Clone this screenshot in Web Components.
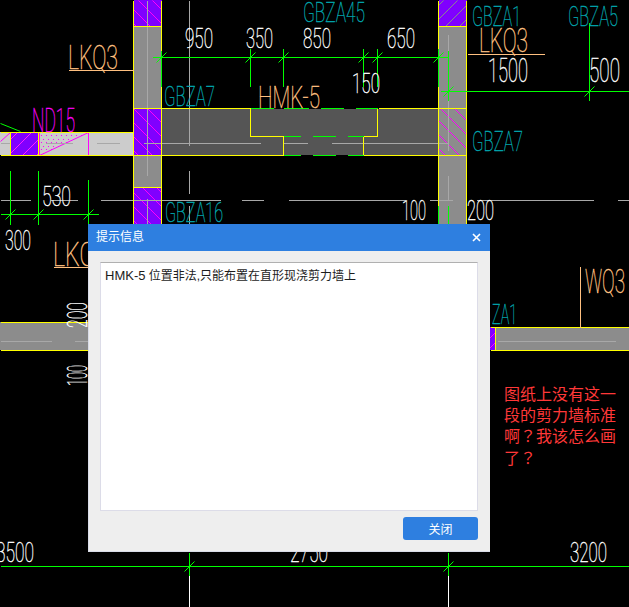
<!DOCTYPE html>
<html lang="zh"><head><meta charset="utf-8"><title>提示信息</title>
<style>
html,body{margin:0;padding:0;background:#000;width:629px;height:607px;overflow:hidden}
body{position:relative}
</style></head><body>
<cad-canvas></cad-canvas>
<msg-dialog heading="提示信息" style="left:88px;top:224px">
<span style="font-size:13px">HMK-5</span> 位置非法,只能布置在直形现浇剪力墙上
<dlg-button slot="actions">关闭</dlg-button>
</msg-dialog>
<script>
const NS='http://www.w3.org/2000/svg';
class CadCanvas extends HTMLElement{
  constructor(){super();
    const r=this.attachShadow({mode:'open'});
    r.innerHTML=`<style>
      :host{position:absolute;left:0;top:0;width:629px;height:607px;display:block;background:#000}
      svg{display:block}
      text{font-family:"Roboto","Liberation Sans",sans-serif;font-weight:100;stroke-width:.42px}
      .note{font-family:"Noto Sans CJK SC",sans-serif;font-size:16px;font-weight:400;fill:#ff3838;stroke:none}
      .note tspan{font-family:"Noto Sans CJK TC",sans-serif}
    </style><svg xmlns="${NS}" width="629" height="607" viewBox="0 0 629 607"></svg>`;
    const s=r.querySelector('svg');
    const el=(n,a,t)=>{const e=document.createElementNS(NS,n);for(const k in a)e.setAttribute(k,a[k]);if(t)e.textContent=t;s.appendChild(e);return e};
    const rect=(x,y,w,h,f)=>el('rect',{x,y,width:w,height:h,fill:f});
    const line=(a,b,c,d,col,crisp=true)=>el('line',{x1:a+.5,y1:b+.5,x2:c+.5,y2:d+.5,stroke:col,'stroke-width':1,'shape-rendering':crisp?'crispEdges':'auto'});
    const Y='#ffff00',G='#00ff00',M='#ff00ff',C='#a8a8a8',P='#8000ff',GR='#8c8c8c',O='#ffc080',T='#00a5ad',W='#ffffff';
    /* fills */
    rect(134,0,28,26,P);rect(134,26,28,82,GR);rect(134,108,28,47,P);rect(134,155,28,32,GR);rect(134,187,28,40,P);
    rect(439,0,28,26,P);rect(439,26,28,198,GR);
    rect(162,109,277,46,'#555555');
    rect(0,132,134,23,'#cccccc');
    rect(11,132,28,23,P);
    rect(0,322,100,28,GR);rect(490,327,6,23,P);rect(496,327,133,23,GR);
    /* hatching */
    let hid=0;
    const hatch=(x0,y0,x1,y1,step,col,dir,off=0)=>{
      const id='c'+(hid++);
      const cp=el('clipPath',{id});const rc=document.createElementNS(NS,'rect');
      rc.setAttribute('x',x0);rc.setAttribute('y',y0);rc.setAttribute('width',x1-x0);rc.setAttribute('height',y1-y0);cp.appendChild(rc);
      const h=y1-y0;
      for(let x=x0-h-step+off;x<x1+h;x+=step){
        const l=dir>0?line(x,y0,x+h,y1,col,false):line(x+h,y0,x,y1,col,false);
        l.setAttribute('clip-path',`url(#${id})`);
      }
    };
    hatch(134,0,162,26,14,M,1,2);hatch(134,108,162,155,14,M,1,4);hatch(134,187,162,224,14,M,1,3);
    hatch(439,0,467,26,14,'#8a8a8a',-1,4);hatch(439,108,467,155,14,M,1,6);
    hatch(11,132,39,155,14,'#ff20ff',-1,6);hatch(490,327,496,350,10,M,-1,0);
    line(0,141,10,132,M,false);
    /* dotted triangle */
    let row=0;
    for(let yy=135;yy<153;yy+=3.5,row++)for(let xx=41+(row%2?2:0);xx<88;xx+=5){
      if((xx-39)/49+(yy-132)/23<1) rect(Math.round(xx),Math.round(yy),1,1,M);
    }
    line(39,155,88,132,M,false);
    for(const a of [[39,132,39,155],[88,132,88,155],[39,155,88,155]])line(...a,M);
    /* centre lines */
    for(const a of [[147,0,147,175],[147,198,147,224],[189,0,189,6],[189,0,189,145],[189,170,189,193],[189,205,189,224],[448,34,448,150],[448,175,448,200],
      [0,143,10,143],[45,143,72,143],[96,143,119,143],[143,143,162,143],[162,143,260,143],[283,143,307,143],[331,143,447,143],
      [0,200,30,200],[50,200,77,200],[100,200,220,200],[241,200,263,200],[288,200,405,200],[429,200,452,200],[476,200,593,200],[617,200,629,200],
      [0,341,51,341],[74,341,88,341],[497,341,615,341]])line(...a,C);
    /* yellow outlines */
    for(const a of [[133,0,133,224],[161,0,161,224],[133,26,161,26],[133,108,161,108],[133,155,161,155],[133,187,161,187],
      [438,0,438,224],[466,0,466,224],[438,26,466,26],[438,108,466,108],[438,155,466,155],
      [161,108,250,108],[250,108,250,136],[250,136,283,136],[283,136,283,155],[161,155,283,155],
      [378,108,438,108],[377,108,377,136],[363,136,377,136],[363,136,363,155],[363,155,438,155],
      [0,132,133,132],[0,155,133,155],[10,132,10,155],[38,132,38,155],[10,155,38,155],
      [0,322,88,322],[0,350,88,350],[490,327,629,327],[490,350,629,350],[495,327,495,350]])line(...a,Y);
    /* dashed green opening */
    for(const a of [[250,108,273,108],[283,108,308,108],[320,108,343,108],[355,108,377,108],
      [283,136,300,136],[312,136,335,136],[347,136,363,136],[283,155,300,155],[312,155,335,155],[347,155,363,155]])line(...a,G);
    /* dimension lines */
    for(const a of [[152,57,448,57],[161,50,161,86],[250,48,250,86],[283,48,283,86],[363,48,363,86],[377,48,377,86],[438,48,438,86],[448,50,448,100],
      [440,91,629,91],[589,22,589,100],
      [0,214,98,214],[10,170,10,224],[38,170,38,224],[88,179,88,224],
      [0,566,629,566],[189,552,189,575],[448,552,448,575],[448,205,448,224],[438,205,438,224]])line(...a,G);
    for(const [x,y] of [[161,57],[250,57],[283,57],[363,57],[377,57],[438,57],[448,91],[589,91],[10,214],[38,214],[88,214],[189,566],[448,566]])
      line(x-5,y+5,x+5,y-5,G,false);
    line(0,123,20,131,G,false);
    line(189,575,189,607,W);line(448,575,448,607,W);
    /* leaders */
    line(68,70,133,70,O);line(467,54,544,54,O);line(53,267,88,267,O);line(580,266,580,327,O);
    /* drawing text: left, right, baseline, cap height, colour */
    const txt=(t,x0,x1,base,cap,col,rot)=>{
      const a={x:x0,y:base,'font-size':cap/0.711,fill:col,stroke:col,textLength:x1-x0,lengthAdjust:'spacingAndGlyphs'};
      if(rot)a.transform=`rotate(-90 ${rot[0]} ${rot[1]})`;
      return el('text',a,t);
    };
    for(const a of [
      ['950',185,213,48,19,W],['350',246,273,48,19,W],['850',303,331,48,19,W],['650',387,415,48,19,W],['150',352,380,93,19,W],
      ['1500',488,528,82,23,W],['500',589,620,82,23,W],['530',42,71,206,20,W],['300',5,31,250,19,W],
      ['100',402,426,220,19,W],['200',467,494,220,19,W],['3500',-4,34,562,20,W],['2750',290,328,562,20,W],['3200',570,607,562,20,W],
      ['GBZA45',303,365,22,19,T],['GBZA1',472,521,26,20,T],['GBZA5',568,618,26,20,T],['GBZA7',164,215,106,20,T],['GBZA7',472,523,151,20,T],['GBZA16',165,223,222,19,T],['ZA1',492,517,324,20,T],
      ['LKQ3',68,118,69,23,O],['LKQ3',479,528,52,23,O],['HMK-5',258,320,108,22,O],['LKQ',53,95,266,23,O],['WQ3',585,625,293,23,O],
      ['ND15',32,75,132,23,M]])txt(...a);
    txt('200',87,113,328,19,W,[87,328]);
    txt('100',87,108,386,19,W,[87,386]);
    /* red annotation */
    [['图纸上没有这一',400],['段的剪力墙标准',421],['啊','？','我该怎么画',442],['了','？','',464]].forEach(p=>{
      const y=p[p.length-1];
      const e=el('text',{class:'note',x:504,y});
      p.slice(0,-1).forEach(t=>{
        if(t==='？'){const q=document.createElementNS(NS,'tspan');q.setAttribute('lang','zh-TW');q.textContent=t;e.appendChild(q)}
        else if(t)e.appendChild(document.createTextNode(t));
      });
    });
  }
}
class MsgDialog extends HTMLElement{
  constructor(){super();
    const r=this.attachShadow({mode:'open'});
    r.innerHTML=`<style>
      :host{position:absolute;display:flex;flex-direction:column;box-sizing:border-box;width:402px;height:328px;background:#eeeeee;
        border:solid #d9dce8;border-width:0 0 1px 1px;font:12px "Liberation Sans","Noto Sans CJK SC",sans-serif;color:#1c1c1c}
      header{height:27px;background:#2e7fe0;color:#fff;display:flex;align-items:center;justify-content:space-between;padding:0 8px;margin-left:-1px;flex:none;line-height:27px}
      .x{width:9px;height:9px;display:block;margin-right:1px}
      .box{flex:none;box-sizing:border-box;margin:11px 12px 0 11px;height:249px;background:#fff;border:1px solid #dcdce8;border-top-color:#b0b0b0;padding:5px 4px;font-size:12px;line-height:16px}
      footer{display:flex;justify-content:flex-end;padding:6px 12px 0}
    </style>
    <header><span id="t"></span><svg class="x" viewBox="0 0 9 9"><path d="M1 1l7 7M8 1L1 8" stroke="#fff" stroke-width="1.6" fill="none"/></svg></header>
    <div class="box"><slot></slot></div>
    <footer><slot name="actions"></slot></footer>`;
    r.getElementById('t').textContent=this.getAttribute('heading');
  }
}
class DlgButton extends HTMLElement{
  constructor(){super();
    this.attachShadow({mode:'open'}).innerHTML=`<style>
      :host{display:flex;align-items:center;justify-content:center;width:75px;height:23px;background:#2e7fe0;border-radius:3px;color:#fff;font-size:12px;cursor:pointer}
    </style><slot></slot>`;
  }
}
customElements.define('cad-canvas',CadCanvas);
customElements.define('msg-dialog',MsgDialog);
customElements.define('dlg-button',DlgButton);
</script>
</body></html>
